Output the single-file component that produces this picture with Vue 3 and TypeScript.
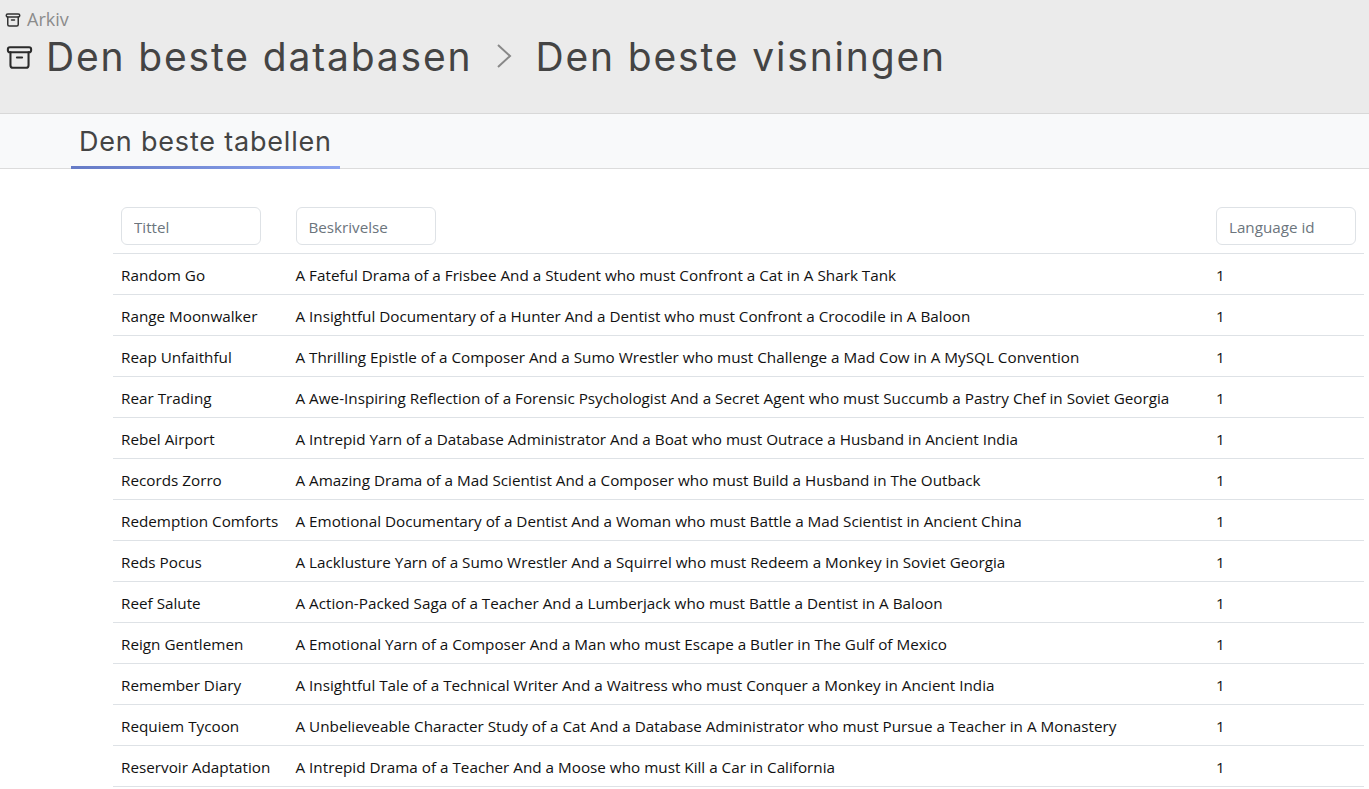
<script setup lang="ts">
interface Film {
  title: string
  description: string
  languageId: number
}

const films: Film[] = [
  { title: 'Random Go', description: 'A Fateful Drama of a Frisbee And a Student who must Confront a Cat in A Shark Tank', languageId: 1 },
  { title: 'Range Moonwalker', description: 'A Insightful Documentary of a Hunter And a Dentist who must Confront a Crocodile in A Baloon', languageId: 1 },
  { title: 'Reap Unfaithful', description: 'A Thrilling Epistle of a Composer And a Sumo Wrestler who must Challenge a Mad Cow in A MySQL Convention', languageId: 1 },
  { title: 'Rear Trading', description: 'A Awe-Inspiring Reflection of a Forensic Psychologist And a Secret Agent who must Succumb a Pastry Chef in Soviet Georgia', languageId: 1 },
  { title: 'Rebel Airport', description: 'A Intrepid Yarn of a Database Administrator And a Boat who must Outrace a Husband in Ancient India', languageId: 1 },
  { title: 'Records Zorro', description: 'A Amazing Drama of a Mad Scientist And a Composer who must Build a Husband in The Outback', languageId: 1 },
  { title: 'Redemption Comforts', description: 'A Emotional Documentary of a Dentist And a Woman who must Battle a Mad Scientist in Ancient China', languageId: 1 },
  { title: 'Reds Pocus', description: 'A Lacklusture Yarn of a Sumo Wrestler And a Squirrel who must Redeem a Monkey in Soviet Georgia', languageId: 1 },
  { title: 'Reef Salute', description: 'A Action-Packed Saga of a Teacher And a Lumberjack who must Battle a Dentist in A Baloon', languageId: 1 },
  { title: 'Reign Gentlemen', description: 'A Emotional Yarn of a Composer And a Man who must Escape a Butler in The Gulf of Mexico', languageId: 1 },
  { title: 'Remember Diary', description: 'A Insightful Tale of a Technical Writer And a Waitress who must Conquer a Monkey in Ancient India', languageId: 1 },
  { title: 'Requiem Tycoon', description: 'A Unbelieveable Character Study of a Cat And a Database Administrator who must Pursue a Teacher in A Monastery', languageId: 1 },
  { title: 'Reservoir Adaptation', description: 'A Intrepid Drama of a Teacher And a Moose who must Kill a Car in California', languageId: 1 },
]
</script>

<template>
  <div class="page">
    <header class="top">
      <div class="crumb">
        <svg class="crumb-icon" viewBox="0 0 24 24" fill="none" stroke="currentColor" stroke-width="2" stroke-linecap="round" stroke-linejoin="round">
          <rect x="3" y="4" width="18" height="4" rx="2" />
          <path d="M5 8v10a2 2 0 0 0 2 2h10a2 2 0 0 0 2-2V8" />
          <path d="M10 12h4" />
        </svg>
        <span>Arkiv</span>
      </div>
      <h1 class="title">
        <svg class="title-icon" viewBox="0 0 24 24" fill="none" stroke="currentColor" stroke-width="1.6" stroke-linecap="round" stroke-linejoin="round">
          <rect x="3" y="4" width="18" height="4" rx="1.6" />
          <path d="M5 8v10a2 2 0 0 0 2 2h10a2 2 0 0 0 2-2V8" />
          <path d="M10 12h4" />
        </svg>
        <span>Den beste databasen</span>
        <svg class="sep" viewBox="0 0 16 26" fill="none" stroke="currentColor" stroke-width="2">
          <path d="M2 2l12 11L2 24" />
        </svg>
        <span>Den beste visningen</span>
      </h1>
    </header>

    <nav class="tabs">
      <a class="tab">Den beste tabellen</a>
    </nav>

    <main class="content">
      <table class="grid">
        <colgroup>
          <col class="c-title" />
          <col class="c-desc" />
          <col class="c-lang" />
        </colgroup>
        <thead>
          <tr>
            <th><input class="filter" placeholder="Tittel" /></th>
            <th><input class="filter" placeholder="Beskrivelse" /></th>
            <th><input class="filter" placeholder="Language id" /></th>
          </tr>
        </thead>
        <tbody>
          <tr v-for="film in films" :key="film.title">
            <td>{{ film.title }}</td>
            <td>{{ film.description }}</td>
            <td>{{ film.languageId }}</td>
          </tr>
        </tbody>
      </table>
    </main>
  </div>
</template>

<style>
html,
body {
  background: #fff;
  overflow: hidden;
}
</style>

<style scoped>
.page {
  height: 789px;
  overflow: hidden;
  font-family: "Open Sans", "Noto Sans", sans-serif;
  color: #212529;
}

.top {
  height: 114px;
  box-sizing: border-box;
  padding: 9px 6px 0;
  background: #ebebeb;
  border-bottom: 1px solid #d8d8d8;
}

.crumb {
  display: flex;
  align-items: center;
  gap: 4.6px;
  height: 20px;
  font-size: 18px;
  color: #8b8b8b;
}

.crumb-icon {
  width: 18px;
  height: 18px;
  margin: 2px 0 0 -1.6px;
  color: #333;
}

.title {
  display: flex;
  align-items: center;
  height: 48px;
  margin: 3px 0 0;
  font-family: Inter, sans-serif;
  font-size: 39px;
  font-weight: 400;
  letter-spacing: 1.85px;
  color: #444;
}

.title-icon {
  width: 31px;
  height: 31px;
  margin: 2px 11px 0 -2px;
  color: #2b2b2b;
}

.sep {
  width: 16px;
  height: 26px;
  margin: 0 23px 0 24px;
  color: #888;
}

.tabs {
  display: flex;
  height: 55px;
  box-sizing: border-box;
  padding-left: 71px;
  background: #f8f9fa;
  border-bottom: 1px solid #dcdcdc;
}

.tab {
  display: flex;
  align-items: center;
  height: 55px;
  box-sizing: border-box;
  padding: 3px 8px 0;
  font-family: Inter, sans-serif;
  font-size: 27px;
  font-weight: 400;
  letter-spacing: 0.8px;
  color: #444;
  border-bottom: 3px solid;
  border-image: linear-gradient(90deg, #667bc6, #8ca4f0) 1;
}

.content {
  padding: 30px 5px 0 113px;
}

.grid {
  width: 100%;
  table-layout: fixed;
  border-collapse: collapse;
  font-size: 15.25px;
}

.c-title {
  width: 174.5px;
}

.c-lang {
  width: 156px;
}

th,
td {
  padding: 8px;
  text-align: left;
  font-weight: 400;
  border-bottom: 1px solid #dee2e6;
  white-space: nowrap;
}

td {
  height: 24px;
  padding: 9px 8px 7px;
  line-height: 24px;
  color: #111;
}

.filter {
  display: block;
  box-sizing: border-box;
  width: 140px;
  height: 38px;
  padding: 2px 12px 0;
  font: inherit;
  font-size: 15.2px;
  border: 1px solid #dee2e6;
  border-radius: 6px;
  background: #fff;
}

.filter::placeholder {
  color: #6c757d;
}
</style>
